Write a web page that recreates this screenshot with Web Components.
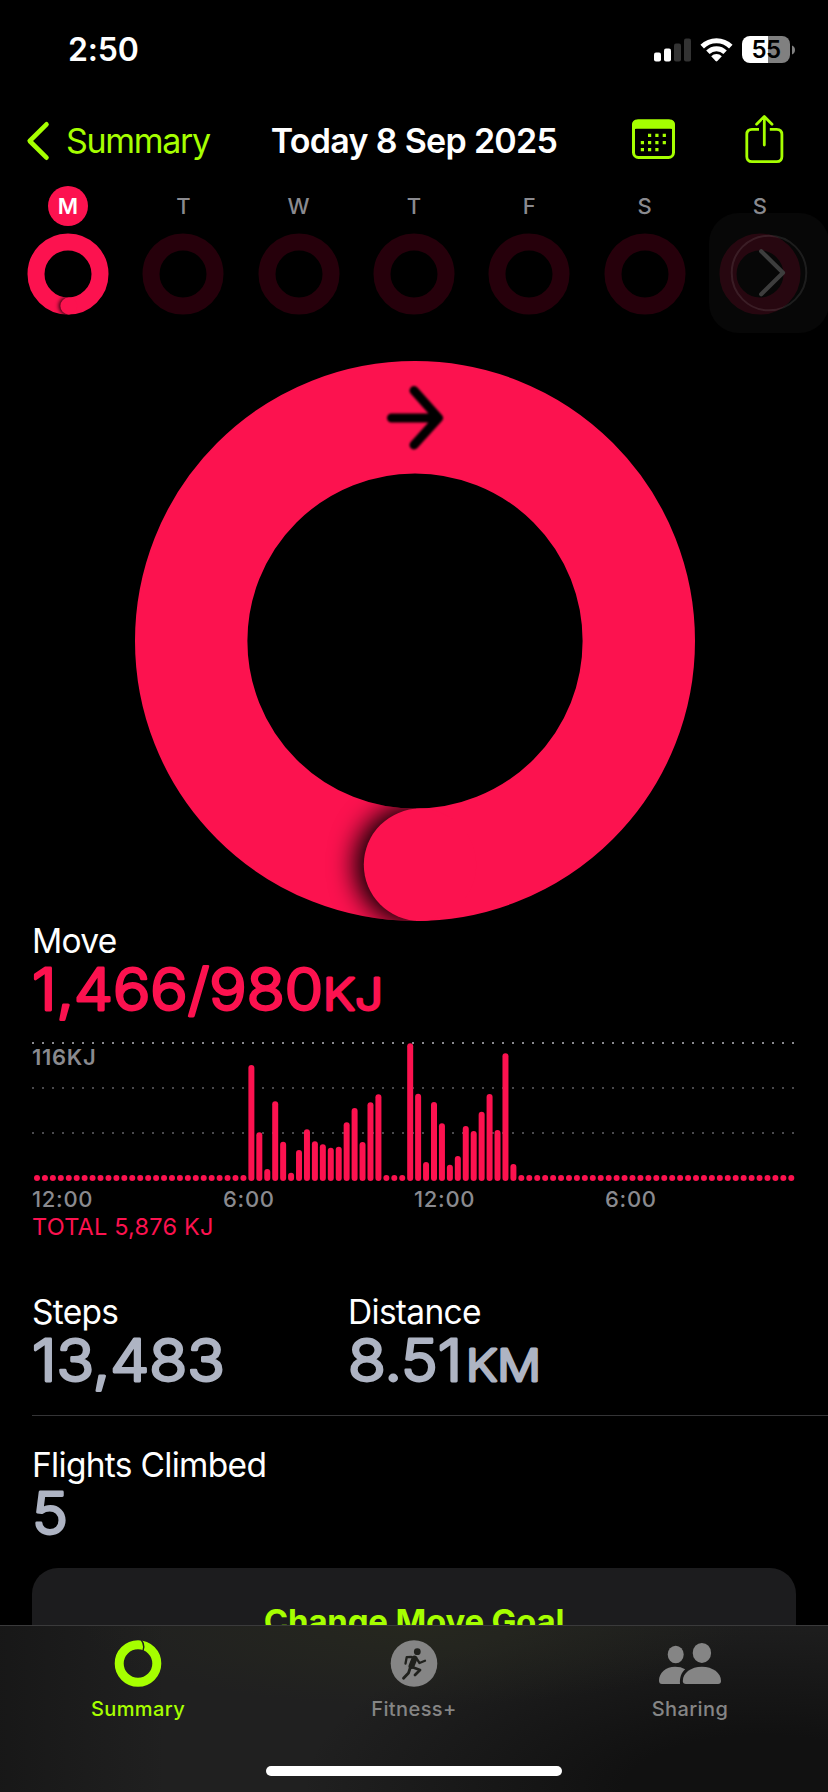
<!DOCTYPE html>
<html lang="en">
<head>
<meta charset="utf-8">
<title>Activity</title>
<style>
    body {
        margin: 0;
        background: #000;
        color: #fff;
        font-family: Inter, "Liberation Sans", sans-serif;
    }
</style>
</head>
<body>
<activity-app></activity-app>

<script>
class StatusBar extends HTMLElement {
    constructor(){
        super();
        this.attachShadow({mode:"open"});
    }

    connectedCallback(){
        this.shadowRoot.innerHTML = `
        <style>
            :host {
                display: flex;
                justify-content: space-between;
                align-items: center;
                height: 99px;
                padding: 0 33px 0 68px;
                box-sizing: border-box;
            }
            .time {
                font-size: 32px;
                font-weight: 600;
                letter-spacing: -0.2px;
            }
            .icons {
                display: flex;
                align-items: center;
            }
            .wifi { margin: 0 9px 0 9px; }
            .battery {
                width: 48px;
                height: 27px;
                border-radius: 8px;
                background: linear-gradient(90deg, #fff 26px, #808080 26px);
                color: #000;
                font-size: 24px;
                font-weight: 600;
                line-height: 27px;
                text-align: center;
                letter-spacing: -0.5px;
            }
            .nub { margin-left: 2px; }
        </style>
        <span class="time">2:50</span>
        <div class="icons">
            <svg width="37" height="24" viewBox="0 0 37 24">
                <rect x="0" y="14.5" width="7" height="9" rx="2" fill="#fff"/>
                <rect x="10" y="10.5" width="7" height="13" rx="2" fill="#fff"/>
                <rect x="20" y="5.5" width="7" height="18" rx="2" fill="#333"/>
                <rect x="30" y="0.5" width="7" height="23" rx="2" fill="#333"/>
            </svg>
            <svg class="wifi" width="33" height="24" viewBox="0 0 33 24">
                <path d="M2.2 8.6A20.4 20.4 0 0 1 30.8 8.6" fill="none" stroke="#fff" stroke-width="5"/>
                <path d="M7.9 14.3A12.2 12.2 0 0 1 25.1 14.3" fill="none" stroke="#fff" stroke-width="4.8"/>
                <path d="M11.2 18.3A7.5 7.5 0 0 1 21.8 18.3L17.4 23.1Q16.5 24 15.6 23.1Z" fill="#fff"/>
            </svg>
            <div class="battery">55</div>
            <svg class="nub" width="3" height="10" viewBox="0 0 3 10">
                <path d="M0 0.5Q3 1.7 3 5T0 9.5Z" fill="#808080"/>
            </svg>
        </div>
        `;
    }
}

class NavBar extends HTMLElement {
    constructor(){
        super();
        this.attachShadow({mode:"open"});
    }

    connectedCallback(){
        this.shadowRoot.innerHTML = `
        <style>
            :host {
                display: grid;
                grid-template-columns: 1fr auto 1fr;
                align-items: center;
                height: 83px;
                padding: 0 44px;
                box-sizing: border-box;
                font-size: 34px;
                color: #a6ff00;
            }
            .back {
                display: flex;
                align-items: center;
                gap: 15px;
                margin-left: -18px;
                letter-spacing: -1.3px;
            }
            .title {
                color: #fff;
                font-weight: 600;
                letter-spacing: -0.7px;
                white-space: nowrap;
            }
            .actions {
                display: flex;
                justify-content: flex-end;
                align-items: center;
                gap: 70px;
                margin-bottom: 3px;
            }
        </style>
        <div class="back">
            <svg width="25" height="40" viewBox="0 0 25 40">
                <path d="M20.5 3.3L3.7 20L20.5 36.7" fill="none" stroke="currentColor" stroke-width="4.6" stroke-linecap="round" stroke-linejoin="round"/>
            </svg>
            <slot name="back"></slot>
        </div>
        <div class="title"><slot></slot></div>
        <div class="actions">
            <svg width="43" height="40" viewBox="0 0 43 40">
                <rect x="1.5" y="2" width="40" height="36.5" rx="5" fill="none" stroke="currentColor" stroke-width="3"/>
                <path d="M0 10V6Q0 .5 5.5 .5H37.5Q43 .5 43 6V12.5Q42 9.8 38.5 9.8H4.5Q1 9.8 0 12.5Z" fill="currentColor"/>
                <path d="M16 16.3h3.2M23.3 16.3h3.2M30.7 16.3h3.2M8.8 23.6H12M16 23.6h3.2M23.3 23.6h3.2M30.7 23.6h3.2M8.8 30.7H12M16 30.7h3.2M23.3 30.7h3.2" stroke="currentColor" stroke-width="3.2"/>
            </svg>
            <svg width="39" height="50" viewBox="0 0 39 50">
                <path d="M14 15.3H7Q1.8 15.3 1.8 20.5V42.5Q1.8 47.7 7 47.7H31.7Q36.9 47.7 36.9 42.5V20.5Q36.9 15.3 31.7 15.3H24.8" fill="none" stroke="currentColor" stroke-width="2.8"/>
                <path d="M19.3 31V2.6M11.6 10.2L19.3 2.5L27 10.2" fill="none" stroke="currentColor" stroke-width="2.8" stroke-linecap="round" stroke-linejoin="round"/>
            </svg>
        </div>
        `;
    }
}

class WeekDay extends HTMLElement {
    constructor(){
        super();
        this.attachShadow({mode:"open"});
    }

    connectedCallback(){
        const today = this.hasAttribute("today");
        this.shadowRoot.innerHTML = `
        <style>
            :host {
                display: flex;
                flex-direction: column;
                align-items: center;
                gap: 7px;
            }
            .letter {
                width: 40px;
                height: 40px;
                border-radius: 50%;
                background: ${today ? "#fc124f" : "none"};
                color: ${today ? "#fff" : "#8a8a8f"};
                font-size: 22px;
                font-weight: ${today ? 600 : 500};
                line-height: 40px;
                text-align: center;
            }
            svg { display: block; }
        </style>
        <div class="letter"><slot></slot></div>
        <svg width="82" height="82" viewBox="0 0 82 82">
            <defs>
                <filter id="soft" x="-50%" y="-50%" width="200%" height="200%"><feGaussianBlur stdDeviation="2"/></filter>
                <clipPath id="left"><path d="M20 60H40.5V82H20Z"/></clipPath>
                <mask id="band" maskUnits="userSpaceOnUse" x="0" y="0" width="82" height="82">
                    <circle cx="41" cy="41" r="32" fill="none" stroke="#fff" stroke-width="17"/>
                </mask>
            </defs>
            <circle cx="41" cy="41" r="32" fill="none" stroke="${today ? "#fc124f" : "#26000b"}" stroke-width="17"/>
            ${today ? `
            <g mask="url(#band)"><g clip-path="url(#left)"><circle cx="41" cy="73" r="8.8" filter="url(#soft)"/></g></g>
            <circle cx="41.8" cy="73" r="8.5" fill="#fc124f"/>` : ""}
        </svg>
        `;
    }
}

class WeekStrip extends HTMLElement {
    constructor(){
        super();
        this.attachShadow({mode:"open"});
    }

    connectedCallback(){
        this.shadowRoot.innerHTML = `
        <style>
            :host {
                display: flex;
                justify-content: space-between;
                position: relative;
                height: 175px;
                padding: 4px 27px 0;
                box-sizing: border-box;
            }
            .next {
                position: absolute;
                right: -1px;
                top: 31px;
                width: 120px;
                height: 120px;
                border-radius: 30px;
                background: rgba(50, 50, 50, 0.14);
            }
        </style>
        <slot></slot>
        <svg class="next" viewBox="0 0 120 120">
            <circle cx="60" cy="60" r="37.3" fill="none" stroke="#fff" stroke-opacity="0.09" stroke-width="2"/>
            <path d="M52.2 38.2L74 59.7L52.2 81.3" fill="none" stroke="#3d3d3d" stroke-width="4.2" stroke-linecap="round" stroke-linejoin="round"/>
        </svg>
        `;
    }
}

class MoveRing extends HTMLElement {
    constructor(){
        super();
        this.attachShadow({mode:"open"});
    }

    connectedCallback(){
        this.shadowRoot.innerHTML = `
        <style>
            :host {
                display: flex;
                justify-content: center;
                height: 564px;
            }
        </style>
        <svg width="561" height="564" viewBox="0 0 561 564">
            <defs>
                <filter id="shade" x="-60%" y="-60%" width="220%" height="220%"><feGaussianBlur stdDeviation="13"/></filter>
                <filter id="edge" x="-20%" y="-20%" width="140%" height="140%"><feGaussianBlur stdDeviation="0.9"/></filter>
                <mask id="band" maskUnits="userSpaceOnUse" x="0" y="0" width="561" height="564">
                    <circle cx="281" cy="284" r="223.8" fill="none" stroke="#fff" stroke-width="112.4"/>
                </mask>
                <clipPath id="tail"><path d="M130 420H282V564H130Z"/></clipPath>
            </defs>
            <circle cx="281" cy="284" r="223.8" fill="none" stroke="#fc124f" stroke-width="112.4"/>
            <g mask="url(#band)"><g clip-path="url(#tail)">
                <circle cx="281" cy="507.8" r="60" filter="url(#shade)"/>
            </g></g>
            <circle cx="286" cy="507.8" r="56.2" fill="#fc124f"/>
            <path d="M257.5 61H303M280 33.5L304.5 61L280 88" fill="none" stroke="#000" stroke-width="9" stroke-linecap="round" stroke-linejoin="round" filter="url(#edge)"/>
        </svg>
        `;
    }
}

/* Figure drawn in rounded strokes, with a smaller unit behind it */
class RoundedFigure extends HTMLElement {
    constructor(){
        super();
        this.attachShadow({mode:"open"});
    }

    connectedCallback(){
        const value = this.getAttribute("value");
        const unit = this.getAttribute("unit") || "";
        const valueWidth = this.getAttribute("value-width");
        const unitWidth = this.getAttribute("unit-width");
        const unitX = this.getAttribute("unit-x");
        this.shadowRoot.innerHTML = `
        <style>
            :host {
                display: block;
                height: 58px;
            }
            svg {
                display: block;
                overflow: visible;
            }
            text {
                fill: currentColor;
                stroke: currentColor;
                stroke-width: 2.8px;
                stroke-linejoin: round;
                font-size: 57px;
                font-weight: 300;
            }
            .unit {
                font-size: 44px;
            }
        </style>
        <svg width="400" height="58">
            <text x="0" y="48.8" textLength="${valueWidth}" lengthAdjust="spacingAndGlyphs">${value}</text>
            ${unit ? `<text class="unit" x="${unitX}" y="48.8" textLength="${unitWidth}" lengthAdjust="spacingAndGlyphs">${unit}</text>` : ""}
        </svg>
        `;
    }
}

class StatBlock extends HTMLElement {
    constructor(){
        super();
        this.attachShadow({mode:"open"});
    }

    connectedCallback(){
        this.shadowRoot.innerHTML = `
        <style>
            :host {
                display: block;
                color: #aeb4c3;
            }
            .label {
                color: #fff;
                font-size: 33.5px;
                line-height: 39px;
                letter-spacing: -0.7px;
                white-space: nowrap;
            }
        </style>
        <div class="label"><slot name="label"></slot></div>
        <slot></slot>
        `;
    }
}

class HourChart extends HTMLElement {
    constructor(){
        super();
        this.attachShadow({mode:"open"});
    }

    connectedCallback(){
        // quarter hour bars, heights in px, the rest of the day is idle
        const active = [
            116, 48.7, 12, 79.7, 39.3, 8.3, 31, 51.7, 39.7, 36.7, 33.3, 34.3, 58.7, 73, 39, 78.7, 86.7,
            6, 6, 6, 137.7, 87.3, 19, 79, 57.7, 16.3, 25, 55, 50, 69.3, 87, 51, 127.7, 17
        ];
        const heights = Array(27).fill(6).concat(active, Array(35).fill(6));
        const bars = heights.map((h, i) =>
            `<rect x="${(2 + i * 7.94).toFixed(2)}" y="${(139 - h).toFixed(1)}" width="6" height="${h}" rx="3"/>`
        ).join("");
        this.shadowRoot.innerHTML = `
        <style>
            :host {
                display: block;
                color: #8a8a8f;
                font-size: 22px;
                font-weight: 500;
            }
            .plot {
                position: relative;
                height: 139px;
            }
            svg { display: block; }
            .max {
                position: absolute;
                left: 0;
                top: 1px;
                line-height: 29px;
                font-weight: 600;
                letter-spacing: 0.7px;
            }
            .hours {
                display: grid;
                grid-template-columns: repeat(4, 191px);
                height: 36px;
                line-height: 36px;
                letter-spacing: 0.7px;
            }
            .total {
                color: #fc124f;
                font-size: 23.5px;
                font-weight: 400;
                line-height: 20px;
                letter-spacing: 0.2px;
            }
        </style>
        <div class="plot">
            <svg width="764" height="139">
                <path d="M0 1H762" stroke="#8a8a8f" stroke-width="2" stroke-dasharray="2 8"/>
                <path d="M0 46H762M0 91H762" stroke="#4a4a4d" stroke-width="2" stroke-dasharray="2 8"/>
                <g fill="#fc124f">${bars}</g>
            </svg>
            <span class="max">116KJ</span>
        </div>
        <div class="hours"><span>12:00</span><span>6:00</span><span>12:00</span><span>6:00</span></div>
        <div class="total"><slot></slot></div>
        `;
    }
}

class GoalButton extends HTMLElement {
    constructor(){
        super();
        this.attachShadow({mode:"open"});
    }

    connectedCallback(){
        this.shadowRoot.innerHTML = `
        <style>
            :host {
                display: block;
                height: 106px;
                border-radius: 26px;
                background: #1c1c1e;
                color: #a6ff00;
                font-size: 33px;
                font-weight: 700;
                line-height: 106px;
                letter-spacing: -0.2px;
                text-align: center;
            }
        </style>
        <slot></slot>
        `;
    }
}

class TabItem extends HTMLElement {
    constructor(){
        super();
        this.attachShadow({mode:"open"});
    }

    connectedCallback(){
        this.shadowRoot.innerHTML = `
        <style>
            :host {
                display: flex;
                flex-direction: column;
                align-items: center;
                color: #858585;
                font-size: 20px;
                font-weight: 500;
                line-height: 24px;
                letter-spacing: 0.4px;
            }
            :host([active]) { color: #a6ff00; }
            .icon {
                height: 48px;
                margin-bottom: 10px;
            }
        </style>
        <div class="icon"><slot name="icon"></slot></div>
        <slot></slot>
        `;
    }
}

class TabBar extends HTMLElement {
    constructor(){
        super();
        this.attachShadow({mode:"open"});
    }

    connectedCallback(){
        this.shadowRoot.innerHTML = `
        <style>
            :host {
                display: flex;
                flex-direction: column;
                justify-content: space-between;
                align-items: center;
                height: 167px;
                padding: 13px 0 16px;
                box-sizing: border-box;
                border-top: 1px solid #3a3a3b;
                background:
                    radial-gradient(ellipse 330px 80px at 50% 0, rgba(40, 42, 30, 0.7), transparent),
                    radial-gradient(ellipse 460px 190px at 92% 100%, #111 30%, transparent),
                    linear-gradient(90deg, rgba(20, 20, 20, 0.7), transparent 20%),
                    #202020;
            }
            .tabs {
                display: grid;
                grid-template-columns: repeat(3, 276px);
            }
            .home {
                width: 296px;
                height: 10px;
                border-radius: 5px;
                background: #fff;
            }
        </style>
        <div class="tabs"><slot></slot></div>
        <div class="home"></div>
        `;
    }
}

class ActivityApp extends HTMLElement {
    constructor(){
        super();
        this.attachShadow({mode:"open"});
    }

    connectedCallback(){
        this.shadowRoot.innerHTML = `
        <style>
            :host {
                display: flex;
                flex-direction: column;
                width: 828px;
                height: 1792px;
                overflow: hidden;
            }
            main {
                height: 1625px;
                overflow: hidden;
            }
            .details { padding: 1px 32px 0; }
            .move rounded-figure { color: #fc124f; }
            hour-chart { margin-top: 23px; }
            .row {
                display: grid;
                grid-template-columns: 316px 1fr;
                height: 122px;
                margin: 56px -32px 0 0;
                border-bottom: 1px solid #343436;
            }
            .flights { margin-top: 30px; }
            goal-button { margin-top: 25px; }
        </style>
        <main>
            <status-bar></status-bar>
            <nav-bar><span slot="back">Summary</span>Today 8 Sep 2025</nav-bar>
            <week-strip>
                <week-day today>M</week-day>
                <week-day>T</week-day>
                <week-day>W</week-day>
                <week-day>T</week-day>
                <week-day>F</week-day>
                <week-day>S</week-day>
                <week-day>S</week-day>
            </week-strip>
            <move-ring></move-ring>
            <div class="details">
                <stat-block class="move">
                    <span slot="label">Move</span>
                    <rounded-figure value="1,466/980" value-width="291" unit="KJ" unit-x="291" unit-width="60"></rounded-figure>
                </stat-block>
                <hour-chart>TOTAL 5,876 KJ</hour-chart>
                <div class="row">
                    <stat-block>
                        <span slot="label">Steps</span>
                        <rounded-figure value="13,483" value-width="193"></rounded-figure>
                    </stat-block>
                    <stat-block>
                        <span slot="label">Distance</span>
                        <rounded-figure value="8.51" value-width="114" unit="KM" unit-x="118" unit-width="75"></rounded-figure>
                    </stat-block>
                </div>
                <stat-block class="flights">
                    <span slot="label">Flights Climbed</span>
                    <rounded-figure value="5" value-width="36"></rounded-figure>
                </stat-block>
                <goal-button>Change Move Goal</goal-button>
            </div>
        </main>
        <tab-bar>
            <tab-item active>
                <svg slot="icon" width="48" height="48" viewBox="0 0 48 48">
                    <circle cx="24" cy="24.5" r="18.8" fill="none" stroke="currentColor" stroke-width="9"/>
                    <path d="M27 0.5Q32.5 7.5 27 15.5" fill="none" stroke="#20201f" stroke-width="1.4"/>
                </svg>
                Summary
            </tab-item>
            <tab-item>
                <svg slot="icon" width="48" height="48" viewBox="0 0 48 48">
                    <circle cx="24" cy="24.5" r="23.3" fill="currentColor"/>
                    <g fill="none" stroke="#20211d" stroke-linecap="round" stroke-linejoin="round">
                        <path d="M15.5 24.5L16.7 18.2L21.5 18L24.5 19" stroke-width="2.3"/>
                        <path d="M24.5 19.5L21.5 27" stroke-width="6"/>
                        <path d="M27 20.2L29.5 24L35 21.8" stroke-width="2.3"/>
                        <path d="M22 28L30 31L25 36" stroke-width="2.8"/>
                        <path d="M20 29.5L18.5 34L13.5 39.3" stroke-width="2.8"/>
                    </g>
                    <circle cx="27.3" cy="12.7" r="3.4" fill="#20211d"/>
                </svg>
                Fitness+
            </tab-item>
            <tab-item>
                <svg slot="icon" width="64" height="48" viewBox="0 0 64 48" fill="currentColor">
                    <ellipse cx="17.7" cy="15.5" rx="8" ry="8.7"/>
                    <ellipse cx="43.9" cy="13.9" rx="9.2" ry="10"/>
                    <path d="M4 45Q1 45 1 41.5C1 34 8 27.8 17 27.8Q23 27.8 27.2 30.2C23.5 33.5 21.5 38 22 45Z"/>
                    <path d="M28 45Q24.8 45 24.8 42C24.8 34 33 27.8 43.9 27.8S63 34 63 42Q63 45 60 45Z"/>
                </svg>
                Sharing
            </tab-item>
        </tab-bar>
        `;
    }
}

customElements.define("status-bar", StatusBar);
customElements.define("nav-bar", NavBar);
customElements.define("week-day", WeekDay);
customElements.define("week-strip", WeekStrip);
customElements.define("move-ring", MoveRing);
customElements.define("rounded-figure", RoundedFigure);
customElements.define("stat-block", StatBlock);
customElements.define("hour-chart", HourChart);
customElements.define("goal-button", GoalButton);
customElements.define("tab-item", TabItem);
customElements.define("tab-bar", TabBar);
customElements.define("activity-app", ActivityApp);
</script>
</body>
</html>
